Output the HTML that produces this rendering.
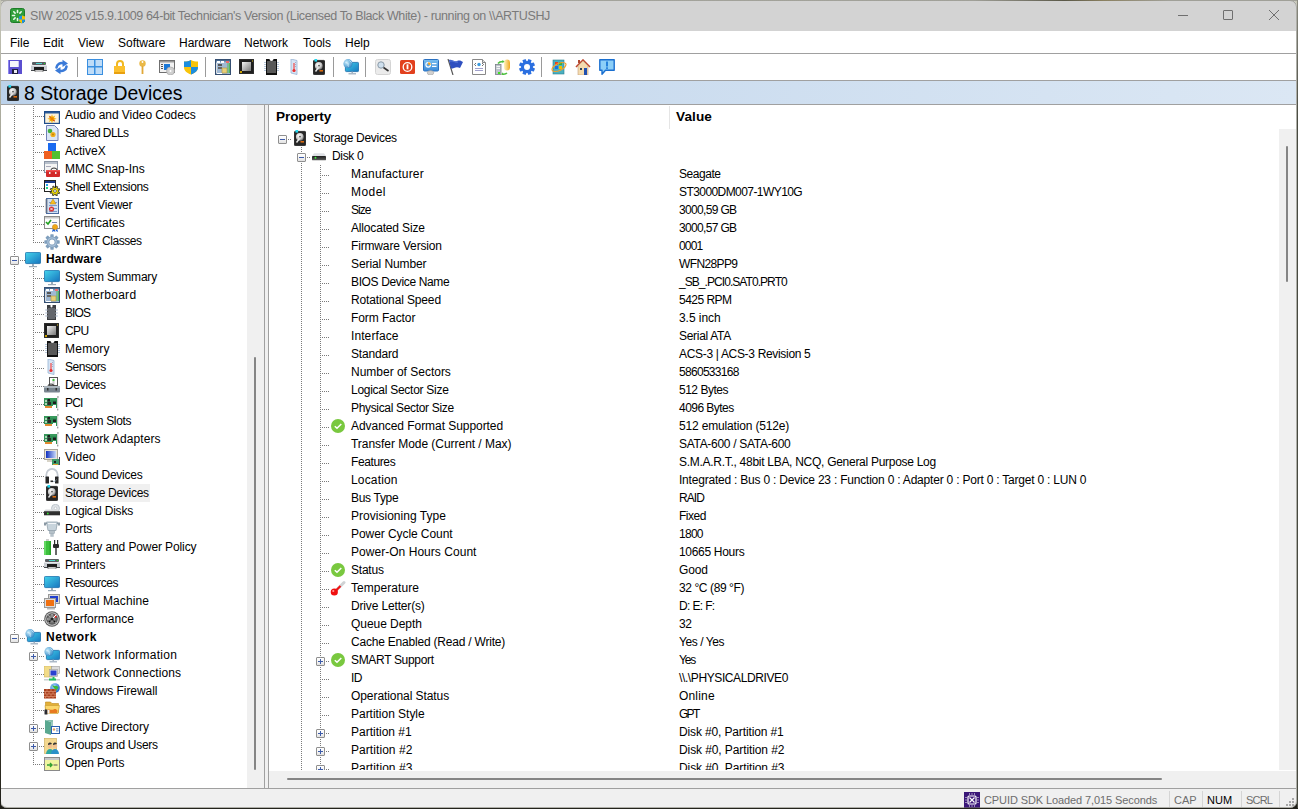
<!DOCTYPE html><html><head><meta charset="utf-8"><style>
*{margin:0;padding:0;box-sizing:border-box}
html,body{width:1298px;height:809px;overflow:hidden;background:linear-gradient(#c8c8b8,#9a9a8c 40%,#45402f 85%,#1e1e18);font-family:"Liberation Sans", sans-serif;font-size:12px;color:#000}
.a{position:absolute}
#win{position:absolute;left:0;top:0;width:1297px;height:808px;background:#f0f0f0;border-radius:7px;overflow:hidden}
#frame{position:absolute;left:0;top:0;width:1297px;height:808px;border:1px solid rgba(120,120,110,.55);border-radius:7px}
.t{position:absolute;white-space:nowrap;line-height:14px}
.vd{position:absolute;width:1px;background:repeating-linear-gradient(to bottom,#7a7a7a 0 1px,transparent 1px 2px)}
.hd{position:absolute;height:1px;background:repeating-linear-gradient(to right,#7a7a7a 0 1px,transparent 1px 2px)}
.bx{position:absolute;width:9px;height:9px;border:1px solid #8f8f8f;border-radius:1px;background:linear-gradient(#fff 0,#f4f4f4 50%,#e2e2e2 100%)}
.bx:before{content:"";position:absolute;left:1px;top:3px;width:5px;height:1px;background:#3d5ba9}
.bx.p:after{content:"";position:absolute;left:3px;top:1px;width:1px;height:5px;background:#3d5ba9}
.ic{position:absolute;width:16px;height:16px}
</style></head><body><div id="win"><div class="a" style="left:0;top:0;width:1296px;height:31px;background:#d3d3d3"></div><div class="t" style="left:30px;top:9px;color:#7a7a7a;font-size:12.5px;line-height:15px;letter-spacing:-0.385px">SIW 2025 v15.9.1009 64-bit Technician's Version (Licensed To Black White) - running on \\ARTUSHJ</div><svg class="a" style="left:10px;top:8px" width="16" height="16" viewBox="0 0 16 16"><rect x="0.5" y="0.5" width="14" height="14" rx="2" fill="#2f9e3a" stroke="#1d7d28"/><g stroke="#e8f7e8" stroke-width="1.6" stroke-linecap="round"><path d="M7.5 2.5v2M7.5 10.5v2M2.5 7.5h2M3.8 3.8l1.3 1.3M3.8 11.2l1.3-1.3M11.2 3.8l-1.3 1.3"/></g><path d="M9 8.5l3-1 3 1v3c0 2-1.5 3-3 4-1.5-1-3-2-3-4z" fill="#1e90e6"/><path d="M12 7.5l3 1v3H12zM9 11.5h3v4c-1.5-1-3-2-3-4z" fill="#f5c400"/></svg><div class="a" style="left:1178px;top:15px;width:10px;height:1px;background:#6f6f6f"></div><div class="a" style="left:1223px;top:10px;width:10px;height:10px;border:1px solid #6f6f6f;border-radius:1px"></div><svg class="a" style="left:1268px;top:9px" width="12" height="12"><path d="M1 1L11 11M11 1L1 11" stroke="#6f6f6f" stroke-width="1"/></svg><div class="a" style="left:0;top:31px;width:1296px;height:22px;background:#fff"></div><div class="t" style="left:10px;top:36px">File</div><div class="t" style="left:43px;top:36px">Edit</div><div class="t" style="left:78px;top:36px">View</div><div class="t" style="left:118px;top:36px">Software</div><div class="t" style="left:179px;top:36px">Hardware</div><div class="t" style="left:244px;top:36px">Network</div><div class="t" style="left:303px;top:36px">Tools</div><div class="t" style="left:345px;top:36px">Help</div><div class="a" style="left:0;top:53px;width:1296px;height:1px;background:#a0a0a0"></div><div class="a" style="left:0;top:54px;width:1296px;height:26px;background:#fff"></div><div class="a" style="left:77px;top:57px;width:1px;height:20px;background:#9a9a9a"></div><div class="a" style="left:205px;top:57px;width:1px;height:20px;background:#9a9a9a"></div><div class="a" style="left:333px;top:57px;width:1px;height:20px;background:#9a9a9a"></div><div class="a" style="left:365px;top:57px;width:1px;height:20px;background:#9a9a9a"></div><div class="a" style="left:541px;top:57px;width:1px;height:20px;background:#9a9a9a"></div><div class="a" style="left:0;top:80px;width:1296px;height:1px;background:#a0a0a0"></div><div class="a" style="left:0;top:81px;width:1296px;height:23px;background:linear-gradient(90deg,#bcd2ea,#dbe7f4)"></div><div class="a" style="left:0;top:104px;width:1296px;height:1px;background:#a0a0a0"></div><div class="t" style="left:24px;top:83px;font-size:19.4px;line-height:20px">8 Storage Devices</div><svg class="a" style="left:8px;top:60px" width="14" height="14" viewBox="0 0 14 14"><rect x="0" y="0" width="14" height="14" fill="#5b4fd0"/><rect x="0" y="0" width="1" height="14" fill="#8d86ee"/><rect x="2" y="1" width="9" height="6" fill="#f4f4fb"/><rect x="10" y="1" width="1" height="6" fill="#c9c6ee"/><rect x="4" y="9" width="6" height="5" fill="#1e1e3c"/><rect x="6" y="10" width="3" height="3" fill="#e8e8f0"/></svg><svg class="a" style="left:31px;top:61px" width="16" height="11" viewBox="0 0 16 11"><rect x="1" y="1" width="14" height="3" rx="1" fill="#5a5e62"/><rect x="5" y="2" width="6" height="1" fill="#4fd6d0"/><rect x="13" y="2" width="1" height="1" fill="#22dd22"/><rect x="0" y="4" width="16" height="6" fill="#c9cdd2"/><rect x="0" y="4" width="16" height="1" fill="#e6e8ea"/><rect x="0" y="9" width="16" height="1" fill="#45484c"/><rect x="3" y="6" width="10" height="3" fill="#1c1c1c"/><rect x="4" y="9" width="8" height="2" fill="#f4f4f4" stroke="#333" stroke-width="0.5"/></svg><svg class="a" style="left:55px;top:59px" width="13" height="16" viewBox="0 0 13 16"><path d="M1.5 8.5C2 5 5 3.5 8.5 4.2" stroke="#3a7ad8" stroke-width="2.6" fill="none" stroke-linecap="round"/><path d="M7.5 0.8L13 4.5 7.5 8z" fill="#3a7ad8"/><path d="M11.5 7.5C11 11 8 12.5 4.5 11.8" stroke="#3a7ad8" stroke-width="2.6" fill="none" stroke-linecap="round"/><path d="M5.5 8L0 11.5 5.5 15.2z" fill="#3a7ad8"/></svg><svg class="a" style="left:87px;top:59px" width="16" height="16" viewBox="0 0 16 16"><rect x="0.5" y="0.5" width="15" height="15" fill="#bfdcf7" stroke="#3a8fe0"/><rect x="7.5" y="0" width="1" height="16" fill="#3a8fe0"/><rect x="0" y="7.5" width="16" height="1" fill="#3a8fe0"/><path d="M7.5 0v16M0 7.5h16" stroke="#3a8fe0" stroke-width="1"/></svg><svg class="a" style="left:114px;top:60px" width="11" height="14" viewBox="0 0 11 14"><path d="M3 6V4a3 3 0 0 1 6 0v2" fill="none" stroke="#f0b820" stroke-width="2"/><rect x="0" y="6" width="11" height="8" fill="#fbc02d"/><rect x="0" y="12" width="11" height="2" fill="#e8a010"/></svg><svg class="a" style="left:139px;top:60px" width="7" height="14" viewBox="0 0 7 14"><circle cx="3.5" cy="3.5" r="3.2" fill="#eab846"/><circle cx="3.5" cy="2" r="0.9" fill="#fff"/><rect x="2.6" y="6" width="1.8" height="8" fill="#e0a838"/></svg><svg class="a" style="left:159px;top:60px" width="16" height="15" viewBox="0 0 16 15"><rect x="0.5" y="0.5" width="15" height="12" fill="#f2f2f2" stroke="#6f6f6f"/><rect x="1" y="1" width="14" height="1.5" fill="#9a9a9a"/><rect x="5" y="4" width="6" height="6" fill="#1a78d8"/><rect x="2" y="4" width="2" height="1" fill="#555"/><rect x="2" y="6" width="2" height="1" fill="#555"/><rect x="2" y="8" width="2" height="1" fill="#555"/><circle cx="11.5" cy="11" r="4" fill="#cfcfcf" stroke="#a0a0a0" stroke-width="0.6"/><circle cx="11.5" cy="11" r="1" fill="#fff"/></svg><svg class="a" style="left:184px;top:60px" width="14" height="15" viewBox="0 0 14 15"><path d="M7 0c2 1 4 1.6 7 1.6V7c0 4-3 6-7 7.5C3 13 0 11 0 7V1.6C3 1.6 5 1 7 0z" fill="#f8c40c"/><path d="M7 0c-2 1-4 1.6-7 1.6V7h7zM7 7h7c0 4-3 6-7 7.5z" fill="#1c8ee0"/></svg><svg class="a" style="left:215px;top:59px" width="16" height="16" viewBox="0 0 16 16"><rect x="0.5" y="0.5" width="15" height="15" fill="#9fb8d4" stroke="#354f72"/><rect x="1" y="1" width="14" height="1.5" fill="#4a6a90"/><rect x="2" y="2" width="3" height="2" fill="#fff"/><rect x="6" y="2" width="3" height="2" fill="#fff"/><rect x="11" y="2" width="3" height="2" fill="#ee6b6b"/><rect x="3" y="5" width="4" height="2" fill="#555"/><rect x="3" y="8" width="4" height="2" fill="#666"/><rect x="7" y="9" width="5" height="5" fill="#e8cf7a" stroke="#b09440" stroke-width="0.6"/><rect x="12.5" y="4" width="1" height="10" fill="#58b858"/><rect x="14" y="4" width="1" height="10" fill="#58b858"/><rect x="1" y="4" width="1" height="10" fill="#ddd"/><rect x="2" y="14" width="5" height="1" fill="#fff"/></svg><svg class="a" style="left:239px;top:59px" width="15" height="15" viewBox="0 0 15 15"><rect x="0" y="0" width="15" height="15" fill="#1f1f1f"/><rect x="0" y="0" width="15" height="15" fill="none" stroke="#3a3a3a"/><defs><linearGradient id="cg" x1="0" y1="0" x2="1" y2="1"><stop offset="0" stop-color="#f4f4f4"/><stop offset="1" stop-color="#777"/></linearGradient></defs><rect x="3" y="3" width="9" height="9" fill="url(#cg)"/><rect x="1" y="12" width="2" height="2" fill="#c8a000"/><rect x="13" y="1" width="1" height="2" fill="#807020"/></svg><svg class="a" style="left:264px;top:59px" width="15" height="16" viewBox="0 0 15 16"><path d="M2 0h3.5a2 2 0 0 0 4 0H13v16H2z" fill="#111"/><rect x="3" y="2" width="9" height="12" fill="#595959"/><g fill="#b8c8dc"><rect x="0" y="3" width="2" height="1"/><rect x="0" y="5" width="2" height="1"/><rect x="0" y="7" width="2" height="1"/><rect x="0" y="9" width="2" height="1"/><rect x="0" y="11" width="2" height="1"/><rect x="13" y="3" width="2" height="1"/><rect x="13" y="5" width="2" height="1"/><rect x="13" y="7" width="2" height="1"/><rect x="13" y="9" width="2" height="1"/><rect x="13" y="11" width="2" height="1"/></g></svg><svg class="a" style="left:290px;top:59px" width="9" height="16" viewBox="0 0 9 16"><path d="M1 0l6 1.5v14L1 14z" fill="#d6e4f4" stroke="#98b4d4" stroke-width="0.8"/><rect x="3.3" y="4" width="1.4" height="7" fill="#f06060"/><circle cx="4" cy="11.5" r="1.6" fill="#e83030"/><g fill="#88a"><rect x="5" y="3" width="1" height="0.6"/><rect x="5" y="5" width="1" height="0.6"/><rect x="5" y="7" width="1" height="0.6"/></g></svg><svg class="a" style="left:313px;top:59px" width="12" height="16" viewBox="0 0 12 16"><defs><radialGradient id="hg" cx="0.4" cy="0.35" r="0.7"><stop offset="0" stop-color="#ffffff"/><stop offset="0.6" stop-color="#c8c8c8"/><stop offset="1" stop-color="#6a6a6a"/></radialGradient></defs><rect x="0.4" y="1.4" width="11.2" height="14.2" rx="0.8" fill="#262626" stroke="#141414" stroke-width="0.8"/><rect x="1.5" y="0" width="2.6" height="2.6" fill="#22d8f0"/><circle cx="5.8" cy="6.8" r="3.9" fill="url(#hg)"/><circle cx="6" cy="6.6" r="0.9" fill="#555"/><path d="M2.5 12.5l3-4" stroke="#e8e8e8" stroke-width="1.4"/><rect x="6.5" y="11" width="3.5" height="1.6" fill="#d86a10"/></svg><svg class="a" style="left:343px;top:59px" width="16" height="16" viewBox="0 0 16 16"><defs><linearGradient id="mg" x1="0" y1="0" x2="1" y2="1"><stop offset="0" stop-color="#40d0ea"/><stop offset="1" stop-color="#1778c0"/></linearGradient><radialGradient id="gg" cx="0.35" cy="0.35" r="0.7"><stop offset="0" stop-color="#c8ecfc"/><stop offset="1" stop-color="#2f86c4"/></radialGradient></defs><rect x="2.4" y="3.4" width="13.2" height="9.2" rx="1" fill="url(#mg)" stroke="#1468a8" stroke-width="0.8"/><rect x="8.5" y="12.6" width="1.4" height="1.6" fill="#9ab"/><rect x="5.5" y="14.2" width="7.5" height="1.2" fill="#9ab"/><circle cx="5" cy="4.7" r="4.6" fill="url(#gg)"/><path d="M2.5 3.5c1 0.5 2 0 2.5 1s-0.5 2 0.5 3M6.5 1.5c0.5 1 1.5 1 2 2" stroke="#e4f4fc" stroke-width="0.8" fill="none"/></svg><svg class="a" style="left:375px;top:59px" width="16" height="16" viewBox="0 0 16 16"><rect x="0.5" y="0.5" width="15" height="15" rx="2" fill="#ebebeb" stroke="#d4d4d4"/><circle cx="6" cy="6" r="3.2" fill="#cfe0ee" stroke="#8a9aa8" stroke-width="1"/><path d="M8.5 8.5l5 3.5" stroke="#333" stroke-width="1.6"/></svg><svg class="a" style="left:400px;top:60px" width="15" height="14" viewBox="0 0 15 14"><rect x="0" y="0" width="15" height="14" rx="1.5" fill="#e2401e"/><circle cx="7.5" cy="7" r="4.3" fill="none" stroke="#fff" stroke-width="1.3"/><rect x="6.6" y="4.3" width="1.8" height="5" fill="#fff"/></svg><svg class="a" style="left:423px;top:59px" width="16" height="16" viewBox="0 0 16 16"><defs><linearGradient id="cdg" x1="0" y1="0" x2="0" y2="1"><stop offset="0" stop-color="#7cc0f0"/><stop offset="1" stop-color="#3a8ad8"/></linearGradient></defs><rect x="0.5" y="0.5" width="15" height="11.5" rx="1" fill="url(#cdg)" stroke="#2a70c0"/><circle cx="5.2" cy="5.8" r="2.3" fill="none" stroke="#fff" stroke-width="1.1"/><path d="M5.2 3.2A2.6 2.6 0 0 1 7.8 5.8H5.2z" fill="#f8a010"/><rect x="9" y="4" width="4.5" height="1.2" fill="#fff"/><rect x="9" y="6.8" width="4.5" height="1.2" fill="#fff"/><ellipse cx="7.5" cy="13.8" rx="3.3" ry="2.2" fill="#d0d0d0" stroke="#999" stroke-width="0.5"/></svg><svg class="a" style="left:447px;top:59px" width="17" height="16" viewBox="0 0 17 16"><path d="M1 0l5 16" stroke="#555" stroke-width="1.2"/><path d="M2 1c3-1 5 2 8 1s4 0 6 1l-3 6c-2-1-4-1-6 0s-4 0-3 1z" fill="#2f50c0"/><path d="M3 2c3-1 5 2 8 1" stroke="#6a8ae0" stroke-width="0.8" fill="none"/></svg><svg class="a" style="left:472px;top:59px" width="14" height="16" viewBox="0 0 14 16"><path d="M0.5 0.5h10l3 3v12h-13z" fill="#fff" stroke="#888"/><path d="M10.5 0.5v3h3" fill="#ddd" stroke="#888"/><circle cx="7" cy="5.5" r="1.7" fill="#3a9ae0"/><path d="M4 4l-1.5 1.5L4 7M10 4l1.5 1.5L10 7" stroke="#333" stroke-width="0.7" fill="none"/><rect x="3" y="9" width="8" height="0.8" fill="#8a8ac0"/><rect x="3" y="11" width="8" height="0.8" fill="#8a8ac0"/></svg><svg class="a" style="left:495px;top:59px" width="16" height="16" viewBox="0 0 16 16"><defs><linearGradient id="syg" x1="0" y1="0" x2="1" y2="0"><stop offset="0" stop-color="#fff4c0"/><stop offset="1" stop-color="#f0a820"/></linearGradient></defs><rect x="0.5" y="5.5" width="5.5" height="10" fill="#bcc4cc" stroke="#7a8088" stroke-width="0.8"/><rect x="1.5" y="7" width="3.5" height="1" fill="#f4f4f4"/><rect x="1.5" y="9" width="3.5" height="1" fill="#f4f4f4"/><rect x="3" y="13" width="2" height="2" fill="#40e020"/><rect x="9" y="0.5" width="6" height="11" rx="3" fill="url(#syg)"/><path d="M3 4.5c1-1.5 2.5-2 5-2" stroke="#50c040" stroke-width="1.5" fill="none"/><path d="M7.5 1l2 1.5-2 1.8z" fill="#50c040"/><path d="M12 14c-1 1-2.5 1.3-4.5 1.3" stroke="#50c040" stroke-width="1.5" fill="none"/><path d="M8 13.3l-1.8 2 2 1.5z" fill="#50c040"/></svg><svg class="a" style="left:519px;top:59px" width="16" height="16" viewBox="0 0 16 16"><g fill="#2b6fe0"><circle cx="8" cy="8" r="6"/><rect x="6.2" y="0" width="3.6" height="16" rx="0.6" transform="rotate(22.5 8 8)"/><rect x="6.2" y="0" width="3.6" height="16" rx="0.6" transform="rotate(67.5 8 8)"/><rect x="6.2" y="0" width="3.6" height="16" rx="0.6" transform="rotate(112.5 8 8)"/><rect x="6.2" y="0" width="3.6" height="16" rx="0.6" transform="rotate(157.5 8 8)"/></g><circle cx="8" cy="8" r="3" fill="#fff"/></svg><svg class="a" style="left:551px;top:59px" width="16" height="16" viewBox="0 0 16 16"><rect x="2" y="1" width="11" height="14" fill="#4ab0c0" stroke="#2a8090" stroke-width="0.6"/><rect x="4" y="3" width="3" height="3" fill="#e84020"/><rect x="8" y="3" width="3" height="3" fill="#40b030"/><rect x="4" y="7" width="3" height="3" fill="#2070e0"/><rect x="8" y="7" width="3" height="3" fill="#f0c000"/><ellipse cx="8" cy="8" rx="7.5" ry="3.5" fill="none" stroke="#f0a030" stroke-width="1.2" transform="rotate(-25 8 8)"/></svg><svg class="a" style="left:575px;top:59px" width="16" height="16" viewBox="0 0 16 16"><path d="M1 8L8 1l7 7" fill="none" stroke="#c04a30" stroke-width="1.6"/><rect x="3" y="1" width="2" height="3" fill="#b04830"/><path d="M3 7l5-5 5 5v9H3z" fill="#f4dcb0" stroke="#c8a078" stroke-width="0.6"/><rect x="5" y="9" width="2" height="2" fill="#345"/><rect x="9" y="9" width="3" height="7" fill="#2050b0"/></svg><svg class="a" style="left:599px;top:59px" width="16" height="16" viewBox="0 0 16 16"><path d="M0.8 0.8h14.4v10.4H6.5l-3.5 4v-4H0.8z" fill="#8ccff8" stroke="#1a6fd0" stroke-width="1.4" stroke-linejoin="round"/><rect x="7.1" y="2.5" width="1.8" height="5" fill="#1a78d8"/><rect x="7.1" y="8.3" width="1.8" height="1.6" fill="#1a78d8"/></svg><svg class="a" style="left:7px;top:85px" width="12" height="16" viewBox="0 0 12 16"><defs><radialGradient id="hg" cx="0.4" cy="0.35" r="0.7"><stop offset="0" stop-color="#ffffff"/><stop offset="0.6" stop-color="#c8c8c8"/><stop offset="1" stop-color="#6a6a6a"/></radialGradient></defs><rect x="0.4" y="1.4" width="11.2" height="14.2" rx="0.8" fill="#262626" stroke="#141414" stroke-width="0.8"/><rect x="1.5" y="0" width="2.6" height="2.6" fill="#22d8f0"/><circle cx="5.8" cy="6.8" r="3.9" fill="url(#hg)"/><circle cx="6" cy="6.6" r="0.9" fill="#555"/><path d="M2.5 12.5l3-4" stroke="#e8e8e8" stroke-width="1.4"/><rect x="6.5" y="11" width="3.5" height="1.6" fill="#d86a10"/></svg><div class="a" style="left:0;top:105px;width:264px;height:683px;background:#fff"></div><div class="a" style="left:247px;top:105px;width:17px;height:683px;background:#f0f0f0"></div><div class="a" style="left:254px;top:357px;width:2px;height:413px;background:#858585;border-radius:1px"></div><div class="a" style="left:264px;top:105px;width:1px;height:684px;background:#a0a0a0"></div><div class="a" style="left:268px;top:105px;width:1px;height:684px;background:#a0a0a0"></div><div class="a" style="left:269px;top:105px;width:1027px;height:666px;background:#fff"></div><div class="a" style="left:1279px;top:129px;width:17px;height:641px;background:#f0f0f0"></div><div class="a" style="left:1286px;top:146px;width:2px;height:136px;background:#858585;border-radius:1px"></div><div class="a" style="left:269px;top:771px;width:1027px;height:17px;background:#f0f0f0"></div><div class="a" style="left:287px;top:778px;width:875px;height:2px;background:#858585;border-radius:1px"></div><div class="a" style="left:0;top:788px;width:1296px;height:1px;background:#a0a0a0"></div><div class="t" style="left:276px;top:109px;font-weight:bold;font-size:13.6px;line-height:15px;letter-spacing:-0.1px">Property</div><div class="a" style="left:669px;top:106px;width:1px;height:23px;background:#e5e5e5"></div><div class="t" style="left:676px;top:109px;font-weight:bold;font-size:13.6px;line-height:15px;letter-spacing:0.1px">Value</div><svg class="a" style="left:964px;top:792px" width="16" height="16" viewBox="0 0 16 16"><rect width="16" height="16" fill="#3a1678"/><rect x="4" y="4" width="8" height="8" rx="1" fill="none" stroke="#fff" stroke-width="1.2"/><path d="M5.5 5.5l5 5M10.5 5.5l-5 5" stroke="#fff" stroke-width="1.2"/><g fill="#fff"><rect x="5" y="1.5" width="1" height="1"/><rect x="7.5" y="1.5" width="1" height="1"/><rect x="10" y="1.5" width="1" height="1"/><rect x="5" y="13.5" width="1" height="1"/><rect x="7.5" y="13.5" width="1" height="1"/><rect x="10" y="13.5" width="1" height="1"/><rect x="1.5" y="5" width="1" height="1"/><rect x="1.5" y="7.5" width="1" height="1"/><rect x="1.5" y="10" width="1" height="1"/><rect x="13.5" y="5" width="1" height="1"/><rect x="13.5" y="7.5" width="1" height="1"/><rect x="13.5" y="10" width="1" height="1"/></g></svg><div class="t" style="left:984px;top:793px;color:#6d6d6d;font-size:11px;letter-spacing:-0.1px">CPUID SDK Loaded 7,015 Seconds</div><div class="a" style="left:1169px;top:791px;width:1px;height:16px;background:#d5d5d5"></div><div class="a" style="left:1202px;top:791px;width:1px;height:16px;background:#d5d5d5"></div><div class="a" style="left:1241px;top:791px;width:1px;height:16px;background:#d5d5d5"></div><div class="a" style="left:1279px;top:791px;width:1px;height:16px;background:#d5d5d5"></div><div class="t" style="left:1174px;top:793px;color:#6d6d6d;font-size:11px">CAP</div><div class="t" style="left:1207px;top:793px;color:#000;font-size:11px">NUM</div><div class="t" style="left:1246px;top:793px;color:#6d6d6d;font-size:11px;letter-spacing:-0.8px">SCRL</div><div class="a" style="left:1292px;top:798px;width:2px;height:2px;background:#a8a8a8"></div><div class="a" style="left:1289px;top:801px;width:2px;height:2px;background:#a8a8a8"></div><div class="a" style="left:1292px;top:801px;width:2px;height:2px;background:#a8a8a8"></div><div class="a" style="left:1286px;top:804px;width:2px;height:2px;background:#a8a8a8"></div><div class="a" style="left:1289px;top:804px;width:2px;height:2px;background:#a8a8a8"></div><div class="a" style="left:1292px;top:804px;width:2px;height:2px;background:#a8a8a8"></div><div class="a" style="left:0;top:105px;width:247px;height:683px;overflow:hidden"><div class="a" style="left:0;top:-105px;width:247px;height:809px"><div class="vd" style="left:14px;top:106px;height:533px"></div><div class="vd" style="left:33px;top:106px;height:137px"></div><div class="vd" style="left:33px;top:268px;height:353px"></div><div class="vd" style="left:33px;top:646px;height:119px"></div><div class="hd" style="left:35px;top:116px;width:9px"></div><svg class="a" style="left:44px;top:111px" width="16" height="13" viewBox="0 0 16 13"><rect x="0.6" y="0.6" width="14.8" height="11.8" fill="#fbf2dc" stroke="#1f4d8a" stroke-width="1.2"/><rect x="1" y="1" width="14" height="1.5" fill="#2a5a98"/><path d="M8.00 3.20 L8.84 5.77 L11.25 4.55 L10.03 6.96 L12.60 7.80 L10.03 8.64 L11.25 11.05 L8.84 9.83 L8.00 12.40 L7.16 9.83 L4.75 11.05 L5.97 8.64 L3.40 7.80 L5.97 6.96 L4.75 4.55 L7.16 5.77Z" fill="#f4b000"/><circle cx="8" cy="7.8" r="1.6" fill="#f08000"/><circle cx="6" cy="6" r="0.7" fill="#d02020"/><circle cx="10" cy="9.5" r="0.7" fill="#d02020"/></svg><div class="t" style="left:65px;top:108px;letter-spacing:-0.051px;">Audio and Video Codecs</div><div class="hd" style="left:35px;top:134px;width:9px"></div><svg class="a" style="left:44px;top:125px" width="16" height="16" viewBox="0 0 16 16"><path d="M2.5 0.5h8l3.5 3.5v11.5h-11.5z" fill="#dbe6f6" stroke="#7080b8"/><circle cx="6" cy="6" r="2.3" fill="#40b040"/><circle cx="9" cy="9.5" r="2.6" fill="#f0b020"/><circle cx="9" cy="9.5" r="0.9" fill="#c08000"/></svg><div class="t" style="left:65px;top:126px;letter-spacing:-0.594px;">Shared DLLs</div><div class="hd" style="left:35px;top:152px;width:9px"></div><svg class="a" style="left:44px;top:143px" width="16" height="16" viewBox="0 0 16 16"><rect x="4" y="0" width="8" height="8" fill="#1a6af0"/><rect x="0" y="8" width="8" height="8" fill="#f06020"/><rect x="8" y="8" width="8" height="8" fill="#50c030"/></svg><div class="t" style="left:65px;top:144px;">ActiveX</div><div class="hd" style="left:35px;top:170px;width:9px"></div><svg class="a" style="left:44px;top:161px" width="16" height="16" viewBox="0 0 16 16"><rect x="0.5" y="0.5" width="13" height="11" fill="#f4f4f4" stroke="#8a94a4"/><rect x="1" y="1" width="12" height="2" fill="#b8c0cc"/><rect x="2" y="5" width="5" height="1" fill="#aab"/><path d="M7 9a3 2 0 0 1 6 0" stroke="#333" stroke-width="1" fill="none"/><rect x="2" y="9" width="14" height="7" rx="1" fill="#d22a2a"/><rect x="2" y="9" width="14" height="1.5" fill="#f05050"/><rect x="5" y="11" width="1.5" height="2" fill="#eee"/><rect x="11" y="11" width="1.5" height="2" fill="#eee"/></svg><div class="t" style="left:65px;top:162px;letter-spacing:-0.033px;">MMC Snap-Ins</div><div class="hd" style="left:35px;top:188px;width:9px"></div><svg class="a" style="left:44px;top:180px" width="16" height="16" viewBox="0 0 16 16"><rect x="0.5" y="0.5" width="11" height="11" fill="#fff" stroke="#222"/><rect x="1" y="1" width="10" height="2" fill="#1a3a8a"/><rect x="2" y="4" width="2" height="2" fill="#20a0f0"/><rect x="2" y="7" width="2" height="2" fill="#20d080"/><path d="M14.33 11.68 L15.79 12.45 L15.25 13.63 L13.71 13.05 L12.88 13.83 L13.36 15.41 L12.15 15.87 L11.47 14.37 L10.32 14.33 L9.55 15.79 L8.37 15.25 L8.95 13.71 L8.17 12.88 L6.59 13.36 L6.13 12.15 L7.63 11.47 L7.67 10.32 L6.21 9.55 L6.75 8.37 L8.29 8.95 L9.12 8.17 L8.64 6.59 L9.85 6.13 L10.53 7.63 L11.68 7.67 L12.45 6.21 L13.63 6.75 L13.05 8.29 L13.83 9.12 L15.41 8.64 L15.87 9.85 L14.37 10.53Z" fill="#f8e400" stroke="#222" stroke-width="0.9"/><circle cx="11" cy="11" r="1.4" fill="#fff" stroke="#222" stroke-width="0.6"/></svg><div class="t" style="left:65px;top:180px;letter-spacing:-0.324px;">Shell Extensions</div><div class="hd" style="left:35px;top:206px;width:9px"></div><svg class="a" style="left:44px;top:198px" width="16" height="16" viewBox="0 0 16 16"><rect x="2.5" y="0.5" width="12" height="15" fill="#d0e0f4" stroke="#4a6aa0"/><g fill="#6a8ac0"><rect x="5" y="4" width="8" height="0.8"/><rect x="5" y="7" width="8" height="0.8"/><rect x="5" y="10" width="8" height="0.8"/><rect x="5" y="13" width="8" height="0.8"/></g><g stroke="#777" stroke-width="0.8"><path d="M1 2h3M1 4h3M1 6h3M1 8h3M1 10h3M1 12h3M1 14h3"/></g><path d="M9 1l3 5H6z" fill="#f8c020" stroke="#c08010" stroke-width="0.5"/><circle cx="7.5" cy="11" r="2.6" fill="#d83030"/><path d="M6.3 9.8l2.4 2.4M8.7 9.8l-2.4 2.4" stroke="#fff" stroke-width="0.8"/></svg><div class="t" style="left:65px;top:198px;letter-spacing:-0.278px;">Event Viewer</div><div class="hd" style="left:35px;top:224px;width:9px"></div><svg class="a" style="left:44px;top:216px" width="16" height="16" viewBox="0 0 16 16"><rect x="0.5" y="0.5" width="15" height="12" fill="#fbfbfb" stroke="#8a8a8a"/><rect x="1" y="1" width="14" height="1.5" fill="#c8c8c8"/><path d="M2 6l2 2 3-4" stroke="#20a020" stroke-width="1.6" fill="none"/><rect x="8" y="6" width="5" height="0.9" fill="#6a7aa8"/><path d="M9 12l-1 4 2-1 1 1v-4M13 12l1 4-2-1-1 1" fill="#2060d0"/><circle cx="11" cy="11" r="2.6" fill="#f0a818" stroke="#c88010" stroke-width="0.5"/></svg><div class="t" style="left:65px;top:216px;letter-spacing:-0.033px;">Certificates</div><div class="hd" style="left:35px;top:242px;width:9px"></div><svg class="a" style="left:44px;top:234px" width="16" height="16" viewBox="0 0 16 16"><g fill="#809fbd"><circle cx="8" cy="8" r="5.6"/><rect x="6.3" y="0.3" width="3.4" height="15.4" rx="0.6" transform="rotate(0 8 8)"/><rect x="6.3" y="0.3" width="3.4" height="15.4" rx="0.6" transform="rotate(45 8 8)"/><rect x="6.3" y="0.3" width="3.4" height="15.4" rx="0.6" transform="rotate(90 8 8)"/><rect x="6.3" y="0.3" width="3.4" height="15.4" rx="0.6" transform="rotate(135 8 8)"/></g><circle cx="8" cy="8" r="4.2" fill="none" stroke="#a9c2da" stroke-width="1.2"/><circle cx="8" cy="8" r="2.6" fill="#fff"/></svg><div class="t" style="left:65px;top:234px;letter-spacing:-0.435px;">WinRT Classes</div><div class="hd" style="left:20px;top:260px;width:5px"></div><div class="bx m" style="left:10px;top:256px"></div><svg class="a" style="left:25px;top:252px" width="16" height="16" viewBox="0 0 16 16"><defs><linearGradient id="mg2" x1="0" y1="0" x2="1" y2="1"><stop offset="0" stop-color="#44d4ec"/><stop offset="1" stop-color="#1774be"/></linearGradient></defs><rect x="0.4" y="0.4" width="15.2" height="11.2" rx="1.2" fill="url(#mg2)" stroke="#126aa8" stroke-width="0.8"/><rect x="7" y="12" width="2" height="2" fill="#9aaab8"/><rect x="4" y="14" width="8" height="1.2" fill="#9aaab8"/></svg><div class="t" style="left:46px;top:252px;font-weight:bold;letter-spacing:0.129px;">Hardware</div><div class="hd" style="left:35px;top:278px;width:9px"></div><svg class="a" style="left:44px;top:270px" width="16" height="16" viewBox="0 0 16 16"><defs><linearGradient id="mg2" x1="0" y1="0" x2="1" y2="1"><stop offset="0" stop-color="#44d4ec"/><stop offset="1" stop-color="#1774be"/></linearGradient></defs><rect x="0.4" y="0.4" width="15.2" height="11.2" rx="1.2" fill="url(#mg2)" stroke="#126aa8" stroke-width="0.8"/><rect x="7" y="12" width="2" height="2" fill="#9aaab8"/><rect x="4" y="14" width="8" height="1.2" fill="#9aaab8"/></svg><div class="t" style="left:65px;top:270px;letter-spacing:-0.194px;">System Summary</div><div class="hd" style="left:35px;top:296px;width:9px"></div><svg class="a" style="left:44px;top:287px" width="16" height="16" viewBox="0 0 16 16"><rect x="0.5" y="0.5" width="15" height="15" fill="#9fb8d4" stroke="#354f72"/><rect x="1" y="1" width="14" height="1.5" fill="#4a6a90"/><rect x="2" y="2" width="3" height="2" fill="#fff"/><rect x="6" y="2" width="3" height="2" fill="#fff"/><rect x="11" y="2" width="3" height="2" fill="#ee6b6b"/><rect x="3" y="5" width="4" height="2" fill="#555"/><rect x="3" y="8" width="4" height="2" fill="#666"/><rect x="7" y="9" width="5" height="5" fill="#e8cf7a" stroke="#b09440" stroke-width="0.6"/><rect x="12.5" y="4" width="1" height="10" fill="#58b858"/><rect x="14" y="4" width="1" height="10" fill="#58b858"/><rect x="1" y="4" width="1" height="10" fill="#ddd"/><rect x="2" y="14" width="5" height="1" fill="#fff"/></svg><div class="t" style="left:65px;top:288px;letter-spacing:0.306px;">Motherboard</div><div class="hd" style="left:35px;top:314px;width:9px"></div><svg class="a" style="left:45px;top:305px" width="13" height="15" viewBox="0 0 13 15"><path d="M2 0h3.5v1.5a1 1 0 0 0 2 0V0H11v15H2z" fill="#3c3e42"/><rect x="3" y="3" width="7" height="11" fill="#63666c"/><g fill="#cdd6e2"><ellipse cx="1.3" cy="5" rx="1.3" ry="0.9"/><ellipse cx="1.3" cy="8" rx="1.3" ry="0.9"/><ellipse cx="1.3" cy="11" rx="1.3" ry="0.9"/><ellipse cx="11.7" cy="5" rx="1.3" ry="0.9"/><ellipse cx="11.7" cy="8" rx="1.3" ry="0.9"/><ellipse cx="11.7" cy="11" rx="1.3" ry="0.9"/></g></svg><div class="t" style="left:65px;top:306px;letter-spacing:-0.900px;">BIOS</div><div class="hd" style="left:35px;top:332px;width:9px"></div><svg class="a" style="left:44px;top:323px" width="15" height="15" viewBox="0 0 15 15"><rect x="0" y="0" width="15" height="15" fill="#1f1f1f"/><rect x="0" y="0" width="15" height="15" fill="none" stroke="#3a3a3a"/><defs><linearGradient id="cg" x1="0" y1="0" x2="1" y2="1"><stop offset="0" stop-color="#f4f4f4"/><stop offset="1" stop-color="#777"/></linearGradient></defs><rect x="3" y="3" width="9" height="9" fill="url(#cg)"/><rect x="1" y="12" width="2" height="2" fill="#c8a000"/><rect x="13" y="1" width="1" height="2" fill="#807020"/></svg><div class="t" style="left:65px;top:324px;letter-spacing:-0.630px;">CPU</div><div class="hd" style="left:35px;top:350px;width:9px"></div><svg class="a" style="left:45px;top:341px" width="15" height="16" viewBox="0 0 15 16"><path d="M2 0h3.5a2 2 0 0 0 4 0H13v16H2z" fill="#111"/><rect x="3" y="2" width="9" height="12" fill="#595959"/><g fill="#b8c8dc"><rect x="0" y="3" width="2" height="1"/><rect x="0" y="5" width="2" height="1"/><rect x="0" y="7" width="2" height="1"/><rect x="0" y="9" width="2" height="1"/><rect x="0" y="11" width="2" height="1"/><rect x="13" y="3" width="2" height="1"/><rect x="13" y="5" width="2" height="1"/><rect x="13" y="7" width="2" height="1"/><rect x="13" y="9" width="2" height="1"/><rect x="13" y="11" width="2" height="1"/></g></svg><div class="t" style="left:65px;top:342px;letter-spacing:0.252px;">Memory</div><div class="hd" style="left:35px;top:368px;width:9px"></div><svg class="a" style="left:47px;top:359px" width="9" height="16" viewBox="0 0 9 16"><path d="M1 0l6 1.5v14L1 14z" fill="#d6e4f4" stroke="#98b4d4" stroke-width="0.8"/><rect x="3.3" y="4" width="1.4" height="7" fill="#f06060"/><circle cx="4" cy="11.5" r="1.6" fill="#e83030"/><g fill="#88a"><rect x="5" y="3" width="1" height="0.6"/><rect x="5" y="5" width="1" height="0.6"/><rect x="5" y="7" width="1" height="0.6"/></g></svg><div class="t" style="left:65px;top:360px;letter-spacing:-0.450px;">Sensors</div><div class="hd" style="left:35px;top:386px;width:9px"></div><svg class="a" style="left:44px;top:377px" width="16" height="16" viewBox="0 0 16 16"><rect x="5.5" y="0.5" width="8" height="8" fill="#fff" stroke="#555"/><circle cx="9.5" cy="3" r="1.2" fill="#40c040"/><rect x="8.5" y="4" width="2" height="4" fill="#ccc"/><path d="M4 9a3 2 0 0 1 6 0" stroke="#333" fill="none"/><rect x="0" y="9" width="16" height="6.5" rx="1" fill="#7a8690"/><rect x="0" y="9" width="16" height="2" fill="#aab4bc"/><rect x="3" y="11" width="1.5" height="2.5" fill="#333"/><rect x="11.5" y="11" width="1.5" height="2.5" fill="#333"/></svg><div class="t" style="left:65px;top:378px;letter-spacing:-0.300px;">Devices</div><div class="hd" style="left:35px;top:404px;width:9px"></div><svg class="a" style="left:44px;top:396px" width="16" height="16" viewBox="0 0 16 16"><path d="M0 2h13v10h-1v-3H9v1H0z" fill="#2f8f55"/><rect x="0.5" y="2.5" width="12" height="1" fill="#46a868"/><rect x="1" y="4" width="2" height="2" fill="#a8d4b4"/><rect x="1" y="7" width="2" height="2" fill="#a8d4b4"/><rect x="3.5" y="3" width="2.5" height="2.5" fill="#1c1c1c"/><rect x="3.5" y="6" width="3.5" height="3" fill="#2a2a2a"/><rect x="9" y="5.5" width="3" height="2.5" fill="#1c1c1c"/><rect x="1" y="10" width="7" height="2" fill="#e08a30"/><rect x="13" y="0" width="1.3" height="15" fill="#d4d4d4"/><rect x="13" y="0.5" width="2" height="1" fill="#a0a0a0"/><rect x="13" y="13" width="1.3" height="1" fill="#a0a0a0"/></svg><div class="t" style="left:65px;top:396px;letter-spacing:-0.810px;">PCI</div><div class="hd" style="left:35px;top:422px;width:9px"></div><svg class="a" style="left:44px;top:414px" width="16" height="16" viewBox="0 0 16 16"><path d="M0 2h13v10h-1v-3H9v1H0z" fill="#2f8f55"/><rect x="0.5" y="2.5" width="12" height="1" fill="#46a868"/><rect x="1" y="4" width="2" height="2" fill="#a8d4b4"/><rect x="1" y="7" width="2" height="2" fill="#a8d4b4"/><rect x="3.5" y="3" width="2.5" height="2.5" fill="#1c1c1c"/><rect x="3.5" y="6" width="3.5" height="3" fill="#2a2a2a"/><rect x="9" y="5.5" width="3" height="2.5" fill="#1c1c1c"/><rect x="1" y="10" width="7" height="2" fill="#e08a30"/><rect x="13" y="0" width="1.3" height="15" fill="#d4d4d4"/><rect x="13" y="0.5" width="2" height="1" fill="#a0a0a0"/><rect x="13" y="13" width="1.3" height="1" fill="#a0a0a0"/></svg><div class="t" style="left:65px;top:414px;letter-spacing:-0.311px;">System Slots</div><div class="hd" style="left:35px;top:440px;width:9px"></div><svg class="a" style="left:44px;top:432px" width="16" height="16" viewBox="0 0 16 16"><path d="M0 2h13v10h-1v-3H9v1H0z" fill="#2f8f55"/><rect x="0.5" y="2.5" width="12" height="1" fill="#46a868"/><rect x="1" y="4" width="2" height="2" fill="#a8d4b4"/><rect x="1" y="7" width="2" height="2" fill="#a8d4b4"/><rect x="3.5" y="3" width="2.5" height="2.5" fill="#1c1c1c"/><rect x="3.5" y="6" width="3.5" height="3" fill="#2a2a2a"/><rect x="9" y="5.5" width="3" height="2.5" fill="#1c1c1c"/><rect x="1" y="10" width="7" height="2" fill="#e08a30"/><rect x="13" y="0" width="1.3" height="15" fill="#d4d4d4"/><rect x="13" y="0.5" width="2" height="1" fill="#a0a0a0"/><rect x="13" y="13" width="1.3" height="1" fill="#a0a0a0"/></svg><div class="t" style="left:65px;top:432px;letter-spacing:0.048px;">Network Adapters</div><div class="hd" style="left:35px;top:458px;width:9px"></div><svg class="a" style="left:44px;top:449px" width="16" height="16" viewBox="0 0 16 16"><rect x="0.5" y="0.5" width="13" height="10" fill="#e8e4d8" stroke="#aaa49a"/><defs><linearGradient id="vg" x1="0" y1="0" x2="1" y2="0"><stop offset="0" stop-color="#1030c0"/><stop offset="1" stop-color="#c8d8f8"/></linearGradient></defs><rect x="2" y="2" width="10" height="7" fill="url(#vg)"/><rect x="3" y="11" width="5" height="2" fill="#d8d4c8"/><rect x="8" y="10" width="7" height="6" fill="#3d9a6a"/><rect x="10" y="12" width="2" height="2" fill="#222"/><rect x="9" y="15" width="5" height="1" fill="#e0a030"/><rect x="15" y="8" width="1" height="8" fill="#445"/></svg><div class="t" style="left:65px;top:450px;">Video</div><div class="hd" style="left:35px;top:476px;width:9px"></div><svg class="a" style="left:44px;top:467px" width="16" height="17" viewBox="0 0 16 17"><path d="M2.3 11V8.3a5.7 6.5 0 0 1 11.4 0V11" fill="none" stroke="#c4cad2" stroke-width="1.8"/><rect x="1.5" y="9.5" width="3.5" height="7" rx="0.5" fill="#262626"/><rect x="11" y="9.5" width="3.5" height="7" rx="0.5" fill="#262626"/><rect x="6.5" y="13.5" width="2.5" height="1.6" fill="#2a2a2a"/><path d="M9 14.5c2 0 3-0.5 3.5-2" stroke="#8aa0b0" stroke-width="0.8" fill="none"/></svg><div class="t" style="left:65px;top:468px;letter-spacing:-0.255px;">Sound Devices</div><div class="hd" style="left:35px;top:494px;width:9px"></div><svg class="a" style="left:46px;top:485px" width="12" height="16" viewBox="0 0 12 16"><defs><radialGradient id="hg" cx="0.4" cy="0.35" r="0.7"><stop offset="0" stop-color="#ffffff"/><stop offset="0.6" stop-color="#c8c8c8"/><stop offset="1" stop-color="#6a6a6a"/></radialGradient></defs><rect x="0.4" y="1.4" width="11.2" height="14.2" rx="0.8" fill="#262626" stroke="#141414" stroke-width="0.8"/><rect x="1.5" y="0" width="2.6" height="2.6" fill="#22d8f0"/><circle cx="5.8" cy="6.8" r="3.9" fill="url(#hg)"/><circle cx="6" cy="6.6" r="0.9" fill="#555"/><path d="M2.5 12.5l3-4" stroke="#e8e8e8" stroke-width="1.4"/><rect x="6.5" y="11" width="3.5" height="1.6" fill="#d86a10"/></svg><div class="a" style="left:63px;top:484px;width:87px;height:18px;background:#f0f0f0"></div><div class="t" style="left:65px;top:486px;letter-spacing:-0.283px;">Storage Devices</div><div class="hd" style="left:35px;top:512px;width:9px"></div><svg class="a" style="left:44px;top:504px" width="16" height="16" viewBox="0 0 16 16"><circle cx="11.5" cy="4.3" r="4" fill="#e0e4e8" stroke="#b4bcc4" stroke-width="0.8"/><circle cx="11.5" cy="4.3" r="1.3" fill="#fff" stroke="#b0b8c0" stroke-width="0.6"/><path d="M1.5 5.5h12l1.5 1.8H0z" fill="#d8dadc"/><rect x="0" y="7.3" width="16" height="4" fill="#2e2e2e"/><rect x="0" y="7.3" width="16" height="0.8" fill="#555"/><rect x="3" y="8.7" width="1.6" height="1.6" fill="#30e030"/></svg><div class="t" style="left:65px;top:504px;letter-spacing:-0.210px;">Logical Disks</div><div class="hd" style="left:35px;top:530px;width:9px"></div><svg class="a" style="left:44px;top:521px" width="16" height="16" viewBox="0 0 16 16"><path d="M0.5 2.5h15" stroke="#7a8a96" stroke-width="1.2"/><rect x="0" y="1.5" width="2" height="3" fill="#8a98a4"/><rect x="14" y="1.5" width="2" height="3" fill="#8a98a4"/><path d="M2.5 1h11l-1.5 8.5H4z" fill="#c8d4dc" stroke="#8898a4" stroke-width="0.7"/><path d="M4 2.5h8" stroke="#fff" stroke-width="0.8"/><rect x="5.5" y="9.5" width="5" height="3" fill="#b4c0c8" stroke="#8898a4" stroke-width="0.5"/><rect x="6.5" y="12.5" width="1.2" height="3.3" fill="#98a8b4"/><rect x="8.3" y="12.5" width="1.2" height="3.3" fill="#98a8b4"/></svg><div class="t" style="left:65px;top:522px;letter-spacing:-0.180px;">Ports</div><div class="hd" style="left:35px;top:548px;width:9px"></div><svg class="a" style="left:44px;top:539px" width="16" height="16" viewBox="0 0 16 16"><rect x="2" y="0" width="3" height="2" fill="#d0d0d0"/><rect x="0" y="2" width="7" height="14" fill="#3cc03c"/><rect x="0" y="2" width="2" height="14" fill="#64d864"/><rect x="5.5" y="2" width="1.5" height="14" fill="#28a028"/><rect x="10" y="1" width="1.2" height="4" fill="#333"/><rect x="13" y="1" width="1.2" height="4" fill="#333"/><rect x="9" y="5" width="6" height="4" rx="1" fill="#2a2a2a"/><rect x="11.3" y="9" width="1.4" height="7" fill="#2a2a2a"/></svg><div class="t" style="left:65px;top:540px;letter-spacing:-0.110px;">Battery and Power Policy</div><div class="hd" style="left:35px;top:566px;width:9px"></div><svg class="a" style="left:44px;top:558px" width="16" height="11" viewBox="0 0 16 11"><rect x="1" y="1" width="14" height="3" rx="1" fill="#5a5e62"/><rect x="5" y="2" width="6" height="1" fill="#4fd6d0"/><rect x="13" y="2" width="1" height="1" fill="#22dd22"/><rect x="0" y="4" width="16" height="6" fill="#c9cdd2"/><rect x="0" y="4" width="16" height="1" fill="#e6e8ea"/><rect x="0" y="9" width="16" height="1" fill="#45484c"/><rect x="3" y="6" width="10" height="3" fill="#1c1c1c"/><rect x="4" y="9" width="8" height="2" fill="#f4f4f4" stroke="#333" stroke-width="0.5"/></svg><div class="t" style="left:65px;top:558px;letter-spacing:-0.129px;">Printers</div><div class="hd" style="left:35px;top:584px;width:9px"></div><svg class="a" style="left:44px;top:576px" width="16" height="16" viewBox="0 0 16 16"><defs><linearGradient id="mg2" x1="0" y1="0" x2="1" y2="1"><stop offset="0" stop-color="#44d4ec"/><stop offset="1" stop-color="#1774be"/></linearGradient></defs><rect x="0.4" y="0.4" width="15.2" height="11.2" rx="1.2" fill="url(#mg2)" stroke="#126aa8" stroke-width="0.8"/><rect x="7" y="12" width="2" height="2" fill="#9aaab8"/><rect x="4" y="14" width="8" height="1.2" fill="#9aaab8"/></svg><div class="t" style="left:65px;top:576px;letter-spacing:-0.495px;">Resources</div><div class="hd" style="left:35px;top:602px;width:9px"></div><svg class="a" style="left:44px;top:594px" width="16" height="16" viewBox="0 0 16 16"><rect x="4.5" y="0.5" width="11" height="9" fill="#d8d8d8" stroke="#999"/><rect x="6" y="2" width="8" height="6" fill="#2040d0"/><rect x="0.5" y="4.5" width="11" height="9" fill="#dcdcdc" stroke="#999"/><rect x="2" y="6" width="8" height="6" fill="#f07010"/><rect x="3" y="14" width="8" height="1.5" fill="#bbb"/></svg><div class="t" style="left:65px;top:594px;letter-spacing:0.103px;">Virtual Machine</div><div class="hd" style="left:35px;top:620px;width:9px"></div><svg class="a" style="left:44px;top:611px" width="16" height="16" viewBox="0 0 16 16"><defs><radialGradient id="pfg" cx="0.5" cy="0.5" r="0.5"><stop offset="0.3" stop-color="#9a9a9a"/><stop offset="1" stop-color="#4a4a4a"/></radialGradient></defs><circle cx="8" cy="8" r="7.8" fill="#5a5a5a"/><circle cx="8" cy="8" r="6.8" fill="#c8c8c8"/><circle cx="8" cy="8" r="5.8" fill="url(#pfg)"/><g stroke="#f0f0f0" stroke-width="0.8"><path d="M3 8h1.5M8 3v1.5M4.5 4.5l1 1M11.5 11.5l-1-1M4.5 11.5l1-1"/></g><path d="M10 3.2l3 2.5-1.5 1.5z" fill="#f02020"/><path d="M8 8l4-4" stroke="#fff" stroke-width="1"/><circle cx="8" cy="8" r="1.6" fill="#222"/><path d="M5 11l1.5-1.5M11 11l-1.5-1.5" stroke="#111" stroke-width="1.2"/></svg><div class="t" style="left:65px;top:612px;letter-spacing:0.018px;">Performance</div><div class="hd" style="left:20px;top:638px;width:5px"></div><div class="bx m" style="left:10px;top:634px"></div><svg class="a" style="left:25px;top:629px" width="16" height="16" viewBox="0 0 16 16"><defs><linearGradient id="mg" x1="0" y1="0" x2="1" y2="1"><stop offset="0" stop-color="#40d0ea"/><stop offset="1" stop-color="#1778c0"/></linearGradient><radialGradient id="gg" cx="0.35" cy="0.35" r="0.7"><stop offset="0" stop-color="#c8ecfc"/><stop offset="1" stop-color="#2f86c4"/></radialGradient></defs><rect x="2.4" y="3.4" width="13.2" height="9.2" rx="1" fill="url(#mg)" stroke="#1468a8" stroke-width="0.8"/><rect x="8.5" y="12.6" width="1.4" height="1.6" fill="#9ab"/><rect x="5.5" y="14.2" width="7.5" height="1.2" fill="#9ab"/><circle cx="5" cy="4.7" r="4.6" fill="url(#gg)"/><path d="M2.5 3.5c1 0.5 2 0 2.5 1s-0.5 2 0.5 3M6.5 1.5c0.5 1 1.5 1 2 2" stroke="#e4f4fc" stroke-width="0.8" fill="none"/></svg><div class="t" style="left:46px;top:630px;font-weight:bold;letter-spacing:0.510px;">Network</div><div class="hd" style="left:35px;top:656px;width:9px"></div><div class="bx p" style="left:29px;top:652px"></div><svg class="a" style="left:44px;top:647px" width="16" height="16" viewBox="0 0 16 16"><defs><linearGradient id="mg" x1="0" y1="0" x2="1" y2="1"><stop offset="0" stop-color="#40d0ea"/><stop offset="1" stop-color="#1778c0"/></linearGradient><radialGradient id="gg" cx="0.35" cy="0.35" r="0.7"><stop offset="0" stop-color="#c8ecfc"/><stop offset="1" stop-color="#2f86c4"/></radialGradient></defs><rect x="2.4" y="3.4" width="13.2" height="9.2" rx="1" fill="url(#mg)" stroke="#1468a8" stroke-width="0.8"/><rect x="8.5" y="12.6" width="1.4" height="1.6" fill="#9ab"/><rect x="5.5" y="14.2" width="7.5" height="1.2" fill="#9ab"/><circle cx="5" cy="4.7" r="4.6" fill="url(#gg)"/><path d="M2.5 3.5c1 0.5 2 0 2.5 1s-0.5 2 0.5 3M6.5 1.5c0.5 1 1.5 1 2 2" stroke="#e4f4fc" stroke-width="0.8" fill="none"/></svg><div class="t" style="left:65px;top:648px;letter-spacing:0.250px;">Network Information</div><div class="hd" style="left:35px;top:674px;width:9px"></div><svg class="a" style="left:44px;top:666px" width="16" height="16" viewBox="0 0 16 16"><rect x="0" y="0" width="8" height="11" fill="#f2dc88" stroke="#c8b060" stroke-width="0.6"/><rect x="7.5" y="0.5" width="8" height="7" fill="#dcdcdc" stroke="#999" stroke-width="0.6"/><rect x="5.5" y="3.5" width="8" height="7" fill="#e4e4e4" stroke="#999" stroke-width="0.6"/><rect x="6.5" y="4.5" width="6" height="5" fill="#2a40d0"/><rect x="8.5" y="11" width="2" height="2" fill="#20c060"/><rect x="0" y="13" width="16" height="1.5" fill="#c8d0d0"/><rect x="5" y="12.5" width="7" height="2" fill="#20c060"/></svg><div class="t" style="left:65px;top:666px;letter-spacing:0.110px;">Network Connections</div><div class="hd" style="left:35px;top:692px;width:9px"></div><svg class="a" style="left:44px;top:683px" width="16" height="16" viewBox="0 0 16 16"><defs><radialGradient id="fwg" cx="0.4" cy="0.35" r="0.7"><stop offset="0" stop-color="#a8dcff"/><stop offset="1" stop-color="#1a60c8"/></radialGradient></defs><circle cx="11" cy="5" r="4.8" fill="url(#fwg)"/><path d="M8 2.5c1.5-0.5 2.5 1 3.5 0.5s2 0 3 1.5c-0.5 1.5-2 1.5-2 3.5" fill="#3cbc3c"/><rect x="0" y="6" width="12" height="9.5" fill="#a8401e"/><g stroke="#e09070" stroke-width="0.7"><path d="M0 8.5h12M0 11h12M0 13.5h12M3 6v2.5M7 6v2.5M11 6v2.5M1.5 8.5v2.5M5 8.5v2.5M9 8.5v2.5M3 11v2.5M7 11v2.5M11 11v2.5M1.5 13.5v2M5 13.5v2M9 13.5v2"/></g></svg><div class="t" style="left:65px;top:684px;letter-spacing:-0.060px;">Windows Firewall</div><div class="hd" style="left:35px;top:710px;width:9px"></div><svg class="a" style="left:44px;top:701px" width="16" height="16" viewBox="0 0 16 16"><path d="M1.5 1h5l1.5 1.5h6.5v9H1.5z" fill="#e2b038" stroke="#c08a20" stroke-width="0.6"/><path d="M1 4.5h14.5l-1.5 8H2z" fill="#fbd66a" stroke="#c89a30" stroke-width="0.6"/><path d="M3.5 9c2-1.5 4 0.5 6-0.5s3 0 4 1l-0.5 2.5H3z" fill="#e87a20"/><rect x="0.5" y="8.5" width="3" height="5" rx="0.5" fill="#2a2a30"/><rect x="3.5" y="9" width="2" height="3.5" fill="#f4f4f4"/></svg><div class="t" style="left:65px;top:702px;letter-spacing:-0.540px;">Shares</div><div class="hd" style="left:35px;top:728px;width:9px"></div><div class="bx p" style="left:29px;top:724px"></div><svg class="a" style="left:44px;top:719px" width="16" height="16" viewBox="0 0 16 16"><path d="M1 1l6 2v13l-6-2z" fill="#5aa890"/><path d="M1 1h8v2H7z" fill="#88c0b0"/><rect x="7" y="3" width="2" height="12" fill="#9ac8c0"/><rect x="7.5" y="7.5" width="8" height="7" fill="#fff" stroke="#2a60b0"/><circle cx="10" cy="10.5" r="1.2" fill="#e0a060"/><rect x="12" y="9.5" width="2.5" height="0.8" fill="#2a60b0"/><rect x="12" y="11.5" width="2.5" height="0.8" fill="#2a60b0"/></svg><div class="t" style="left:65px;top:720px;">Active Directory</div><div class="hd" style="left:35px;top:746px;width:9px"></div><div class="bx p" style="left:29px;top:742px"></div><svg class="a" style="left:44px;top:738px" width="16" height="16" viewBox="0 0 16 16"><rect x="0.5" y="0.5" width="12" height="15" fill="#f4d890" stroke="#c8a850" stroke-width="0.6"/><circle cx="6" cy="8" r="2.3" fill="#f0c090"/><path d="M4 7a2 2 0 0 1 4-1" fill="#333"/><path d="M2 16c0-3 2-5 4-5s4 2 4 5z" fill="#30a8a0"/><circle cx="11" cy="8" r="2.3" fill="#f0c090"/><path d="M9 7a2 2 0 0 1 4-1" fill="#333"/><path d="M7 16c0-3 2-5 4-5s4 2 4 5z" fill="#2a90c8"/></svg><div class="t" style="left:65px;top:738px;letter-spacing:-0.288px;">Groups and Users</div><div class="hd" style="left:35px;top:764px;width:9px"></div><svg class="a" style="left:44px;top:756px" width="16" height="16" viewBox="0 0 16 16"><rect x="0.5" y="1.5" width="15" height="13" fill="#f0f4a0" stroke="#8a8a8a"/><rect x="1" y="2" width="14" height="2" fill="#c8c8c8"/><path d="M3 9h5M6 7l2 2-2 2" stroke="#30a030" stroke-width="1.4" fill="none"/><rect x="9.5" y="8.5" width="4" height="1" fill="#555"/></svg><div class="t" style="left:65px;top:756px;letter-spacing:-0.140px;">Open Ports</div></div></div><div class="a" style="left:269px;top:129px;width:1010px;height:641px;overflow:hidden"><div class="a" style="left:-269px;top:-129px;width:1298px;height:809px"><div class="vd" style="left:301px;top:147px;height:640px"></div><div class="vd" style="left:320px;top:165px;height:620px"></div><div class="hd" style="left:288px;top:139px;width:4px"></div><div class="bx m" style="left:278px;top:135px"></div><svg class="a" style="left:294px;top:130px" width="12" height="16" viewBox="0 0 12 16"><defs><radialGradient id="hg" cx="0.4" cy="0.35" r="0.7"><stop offset="0" stop-color="#ffffff"/><stop offset="0.6" stop-color="#c8c8c8"/><stop offset="1" stop-color="#6a6a6a"/></radialGradient></defs><rect x="0.4" y="1.4" width="11.2" height="14.2" rx="0.8" fill="#262626" stroke="#141414" stroke-width="0.8"/><rect x="1.5" y="0" width="2.6" height="2.6" fill="#22d8f0"/><circle cx="5.8" cy="6.8" r="3.9" fill="url(#hg)"/><circle cx="6" cy="6.6" r="0.9" fill="#555"/><path d="M2.5 12.5l3-4" stroke="#e8e8e8" stroke-width="1.4"/><rect x="6.5" y="11" width="3.5" height="1.6" fill="#d86a10"/></svg><div class="t" style="left:313px;top:131px;letter-spacing:-0.283px;">Storage Devices</div><div class="hd" style="left:307px;top:157px;width:4px"></div><div class="bx m" style="left:297px;top:153px"></div><svg class="a" style="left:312px;top:153px" width="14" height="8" viewBox="0 0 14 8"><defs><linearGradient id="dkg" x1="0" y1="0" x2="0" y2="1"><stop offset="0" stop-color="#1e1e1e"/><stop offset="1" stop-color="#5a5a5a"/></linearGradient></defs><path d="M2 0.3h10l2 2.7H0z" fill="#dfe1e5"/><rect x="0" y="3" width="14" height="4.2" rx="0.4" fill="url(#dkg)"/><circle cx="3.5" cy="4.7" r="0.95" fill="#40f040"/></svg><div class="t" style="left:332px;top:149px;letter-spacing:-0.324px;">Disk 0</div><div class="hd" style="left:322px;top:175px;width:8px"></div><div class="t" style="left:351px;top:167px;letter-spacing:0.180px;">Manufacturer</div><div class="t" style="left:679px;top:167px;letter-spacing:-0.450px;">Seagate</div><div class="hd" style="left:322px;top:193px;width:8px"></div><div class="t" style="left:351px;top:185px;letter-spacing:0.450px;">Model</div><div class="t" style="left:679px;top:185px;letter-spacing:-0.572px;">ST3000DM007-1WY10G</div><div class="hd" style="left:322px;top:211px;width:8px"></div><div class="t" style="left:351px;top:203px;letter-spacing:-0.960px;">Size</div><div class="t" style="left:679px;top:203px;letter-spacing:-0.660px;">3000,59 GB</div><div class="hd" style="left:322px;top:229px;width:8px"></div><div class="t" style="left:351px;top:221px;letter-spacing:-0.166px;">Allocated Size</div><div class="t" style="left:679px;top:221px;letter-spacing:-0.660px;">3000,57 GB</div><div class="hd" style="left:322px;top:247px;width:8px"></div><div class="t" style="left:351px;top:239px;letter-spacing:-0.156px;">Firmware Version</div><div class="t" style="left:679px;top:239px;letter-spacing:-0.840px;">0001</div><div class="hd" style="left:322px;top:265px;width:8px"></div><div class="t" style="left:351px;top:257px;letter-spacing:-0.090px;">Serial Number</div><div class="t" style="left:679px;top:257px;letter-spacing:-0.617px;">WFN28PP9</div><div class="hd" style="left:322px;top:283px;width:8px"></div><div class="t" style="left:351px;top:275px;letter-spacing:-0.360px;">BIOS Device Name</div><div class="t" style="left:679px;top:275px;letter-spacing:-0.940px;">_SB_.PCI0.SAT0.PRT0</div><div class="hd" style="left:322px;top:301px;width:8px"></div><div class="t" style="left:351px;top:293px;letter-spacing:-0.132px;">Rotational Speed</div><div class="t" style="left:679px;top:293px;letter-spacing:-0.514px;">5425 RPM</div><div class="hd" style="left:322px;top:319px;width:8px"></div><div class="t" style="left:351px;top:311px;letter-spacing:-0.090px;">Form Factor</div><div class="t" style="left:679px;top:311px;letter-spacing:-0.051px;">3.5 inch</div><div class="hd" style="left:322px;top:337px;width:8px"></div><div class="t" style="left:351px;top:329px;letter-spacing:0.090px;">Interface</div><div class="t" style="left:679px;top:329px;letter-spacing:-0.300px;">Serial ATA</div><div class="hd" style="left:322px;top:355px;width:8px"></div><div class="t" style="left:351px;top:347px;letter-spacing:-0.180px;">Standard</div><div class="t" style="left:679px;top:347px;letter-spacing:-0.321px;">ACS-3 | ACS-3 Revision 5</div><div class="hd" style="left:322px;top:373px;width:8px"></div><div class="t" style="left:351px;top:365px;letter-spacing:-0.011px;">Number of Sectors</div><div class="t" style="left:679px;top:365px;letter-spacing:-0.700px;">5860533168</div><div class="hd" style="left:322px;top:391px;width:8px"></div><div class="t" style="left:351px;top:383px;letter-spacing:-0.270px;">Logical Sector Size</div><div class="t" style="left:679px;top:383px;letter-spacing:-0.495px;">512 Bytes</div><div class="hd" style="left:322px;top:409px;width:8px"></div><div class="t" style="left:351px;top:401px;letter-spacing:-0.332px;">Physical Sector Size</div><div class="t" style="left:679px;top:401px;letter-spacing:-0.540px;">4096 Bytes</div><div class="hd" style="left:322px;top:427px;width:8px"></div><svg class="a" style="left:331px;top:419px" width="14" height="14" viewBox="0 0 14 14"><circle cx="7" cy="7" r="7" fill="#79c83f"/><path d="M3.8 7.2l2.2 2.1 4.3-4.3" stroke="#fff" stroke-width="1.5" fill="none"/></svg><div class="t" style="left:351px;top:419px;letter-spacing:-0.053px;">Advanced Format Supported</div><div class="t" style="left:679px;top:419px;letter-spacing:-0.161px;">512 emulation (512e)</div><div class="hd" style="left:322px;top:445px;width:8px"></div><div class="t" style="left:351px;top:437px;letter-spacing:-0.039px;">Transfer Mode (Current / Max)</div><div class="t" style="left:679px;top:437px;letter-spacing:-0.300px;">SATA-600 / SATA-600</div><div class="hd" style="left:322px;top:463px;width:8px"></div><div class="t" style="left:351px;top:455px;letter-spacing:-0.386px;">Features</div><div class="t" style="left:679px;top:455px;letter-spacing:-0.282px;">S.M.A.R.T., 48bit LBA, NCQ, General Purpose Log</div><div class="hd" style="left:322px;top:481px;width:8px"></div><div class="t" style="left:351px;top:473px;letter-spacing:0.154px;">Location</div><div class="t" style="left:679px;top:473px;letter-spacing:-0.209px;">Integrated : Bus 0 : Device 23 : Function 0 : Adapter 0 : Port 0 : Target 0 : LUN 0</div><div class="hd" style="left:322px;top:499px;width:8px"></div><div class="t" style="left:351px;top:491px;letter-spacing:-0.309px;">Bus Type</div><div class="t" style="left:679px;top:491px;letter-spacing:-0.900px;">RAID</div><div class="hd" style="left:322px;top:517px;width:8px"></div><div class="t" style="left:351px;top:509px;letter-spacing:0.023px;">Provisioning Type</div><div class="t" style="left:679px;top:509px;letter-spacing:-0.495px;">Fixed</div><div class="hd" style="left:322px;top:535px;width:8px"></div><div class="t" style="left:351px;top:527px;letter-spacing:-0.068px;">Power Cycle Count</div><div class="t" style="left:679px;top:527px;letter-spacing:-0.720px;">1800</div><div class="hd" style="left:322px;top:553px;width:8px"></div><div class="t" style="left:351px;top:545px;letter-spacing:0.038px;">Power-On Hours Count</div><div class="t" style="left:679px;top:545px;letter-spacing:-0.306px;">10665 Hours</div><div class="hd" style="left:322px;top:571px;width:8px"></div><svg class="a" style="left:331px;top:563px" width="14" height="14" viewBox="0 0 14 14"><circle cx="7" cy="7" r="7" fill="#79c83f"/><path d="M3.8 7.2l2.2 2.1 4.3-4.3" stroke="#fff" stroke-width="1.5" fill="none"/></svg><div class="t" style="left:351px;top:563px;letter-spacing:-0.216px;">Status</div><div class="t" style="left:679px;top:563px;letter-spacing:-0.120px;">Good</div><div class="hd" style="left:322px;top:589px;width:8px"></div><svg class="a" style="left:330px;top:580px" width="16" height="16" viewBox="0 0 16 16"><path d="M6 10.5L14 2.5" stroke="#cfd2d4" stroke-width="3" stroke-linecap="round"/><path d="M5 11.5L10.5 6" stroke="#f01414" stroke-width="2.2"/><circle cx="4.3" cy="12" r="3.6" fill="#f01010"/><circle cx="3.3" cy="11" r="1.1" fill="#ff9a9a"/></svg><div class="t" style="left:351px;top:581px;letter-spacing:0.054px;">Temperature</div><div class="t" style="left:679px;top:581px;letter-spacing:-0.405px;">32 °C (89 °F)</div><div class="hd" style="left:322px;top:607px;width:8px"></div><div class="t" style="left:351px;top:599px;letter-spacing:-0.154px;">Drive Letter(s)</div><div class="t" style="left:679px;top:599px;letter-spacing:-0.643px;">D: E: F:</div><div class="hd" style="left:322px;top:625px;width:8px"></div><div class="t" style="left:351px;top:617px;letter-spacing:-0.054px;">Queue Depth</div><div class="t" style="left:679px;top:617px;letter-spacing:-0.540px;">32</div><div class="hd" style="left:322px;top:643px;width:8px"></div><div class="t" style="left:351px;top:635px;letter-spacing:-0.207px;">Cache Enabled (Read / Write)</div><div class="t" style="left:679px;top:635px;letter-spacing:-0.428px;">Yes / Yes</div><div class="hd" style="left:322px;top:661px;width:8px"></div><div class="bx p" style="left:316px;top:657px"></div><svg class="a" style="left:331px;top:653px" width="14" height="14" viewBox="0 0 14 14"><circle cx="7" cy="7" r="7" fill="#79c83f"/><path d="M3.8 7.2l2.2 2.1 4.3-4.3" stroke="#fff" stroke-width="1.5" fill="none"/></svg><div class="t" style="left:351px;top:653px;letter-spacing:-0.330px;">SMART Support</div><div class="t" style="left:679px;top:653px;letter-spacing:-1.170px;">Yes</div><div class="hd" style="left:322px;top:679px;width:8px"></div><div class="t" style="left:351px;top:671px;letter-spacing:-0.540px;">ID</div><div class="t" style="left:679px;top:671px;letter-spacing:-0.392px;">\\.\PHYSICALDRIVE0</div><div class="hd" style="left:322px;top:697px;width:8px"></div><div class="t" style="left:351px;top:689px;letter-spacing:-0.074px;">Operational Status</div><div class="t" style="left:679px;top:689px;letter-spacing:0.180px;">Online</div><div class="hd" style="left:322px;top:715px;width:8px"></div><div class="t" style="left:351px;top:707px;letter-spacing:-0.026px;">Partition Style</div><div class="t" style="left:679px;top:707px;letter-spacing:-1.710px;">GPT</div><div class="hd" style="left:322px;top:733px;width:8px"></div><div class="bx p" style="left:316px;top:729px"></div><div class="t" style="left:351px;top:725px;">Partition #1</div><div class="t" style="left:679px;top:725px;letter-spacing:-0.135px;">Disk #0, Partition #1</div><div class="hd" style="left:322px;top:751px;width:8px"></div><div class="bx p" style="left:316px;top:747px"></div><div class="t" style="left:351px;top:743px;letter-spacing:0.065px;">Partition #2</div><div class="t" style="left:679px;top:743px;letter-spacing:-0.099px;">Disk #0, Partition #2</div><div class="hd" style="left:322px;top:769px;width:8px"></div><div class="bx p" style="left:316px;top:765px"></div><div class="t" style="left:351px;top:761px;letter-spacing:0.065px;">Partition #3</div><div class="t" style="left:679px;top:761px;letter-spacing:-0.099px;">Disk #0, Partition #3</div></div></div></div><div id="frame"></div><div class="a" style="left:0;top:0;width:1298px;height:1px;background:linear-gradient(90deg,#a8a8a0 0,#a0a098 75%,#5a5848 82%,#8a8060 85%,#a0a098 90%,#a0a098 100%)"></div><div class="a" style="left:0;top:0;width:1px;height:809px;background:linear-gradient(#c4c4b6 0,#9a9a8c 25%,#858578 50%,#45402f 88%,#1e1e18 100%)"></div><div class="a" style="left:1297px;top:0;width:1px;height:809px;background:linear-gradient(#8a8a80 0,#484a40 15%,#484a40 100%)"></div><div class="a" style="left:0;top:808px;width:1298px;height:1px;background:#23231c"></div></body></html>
